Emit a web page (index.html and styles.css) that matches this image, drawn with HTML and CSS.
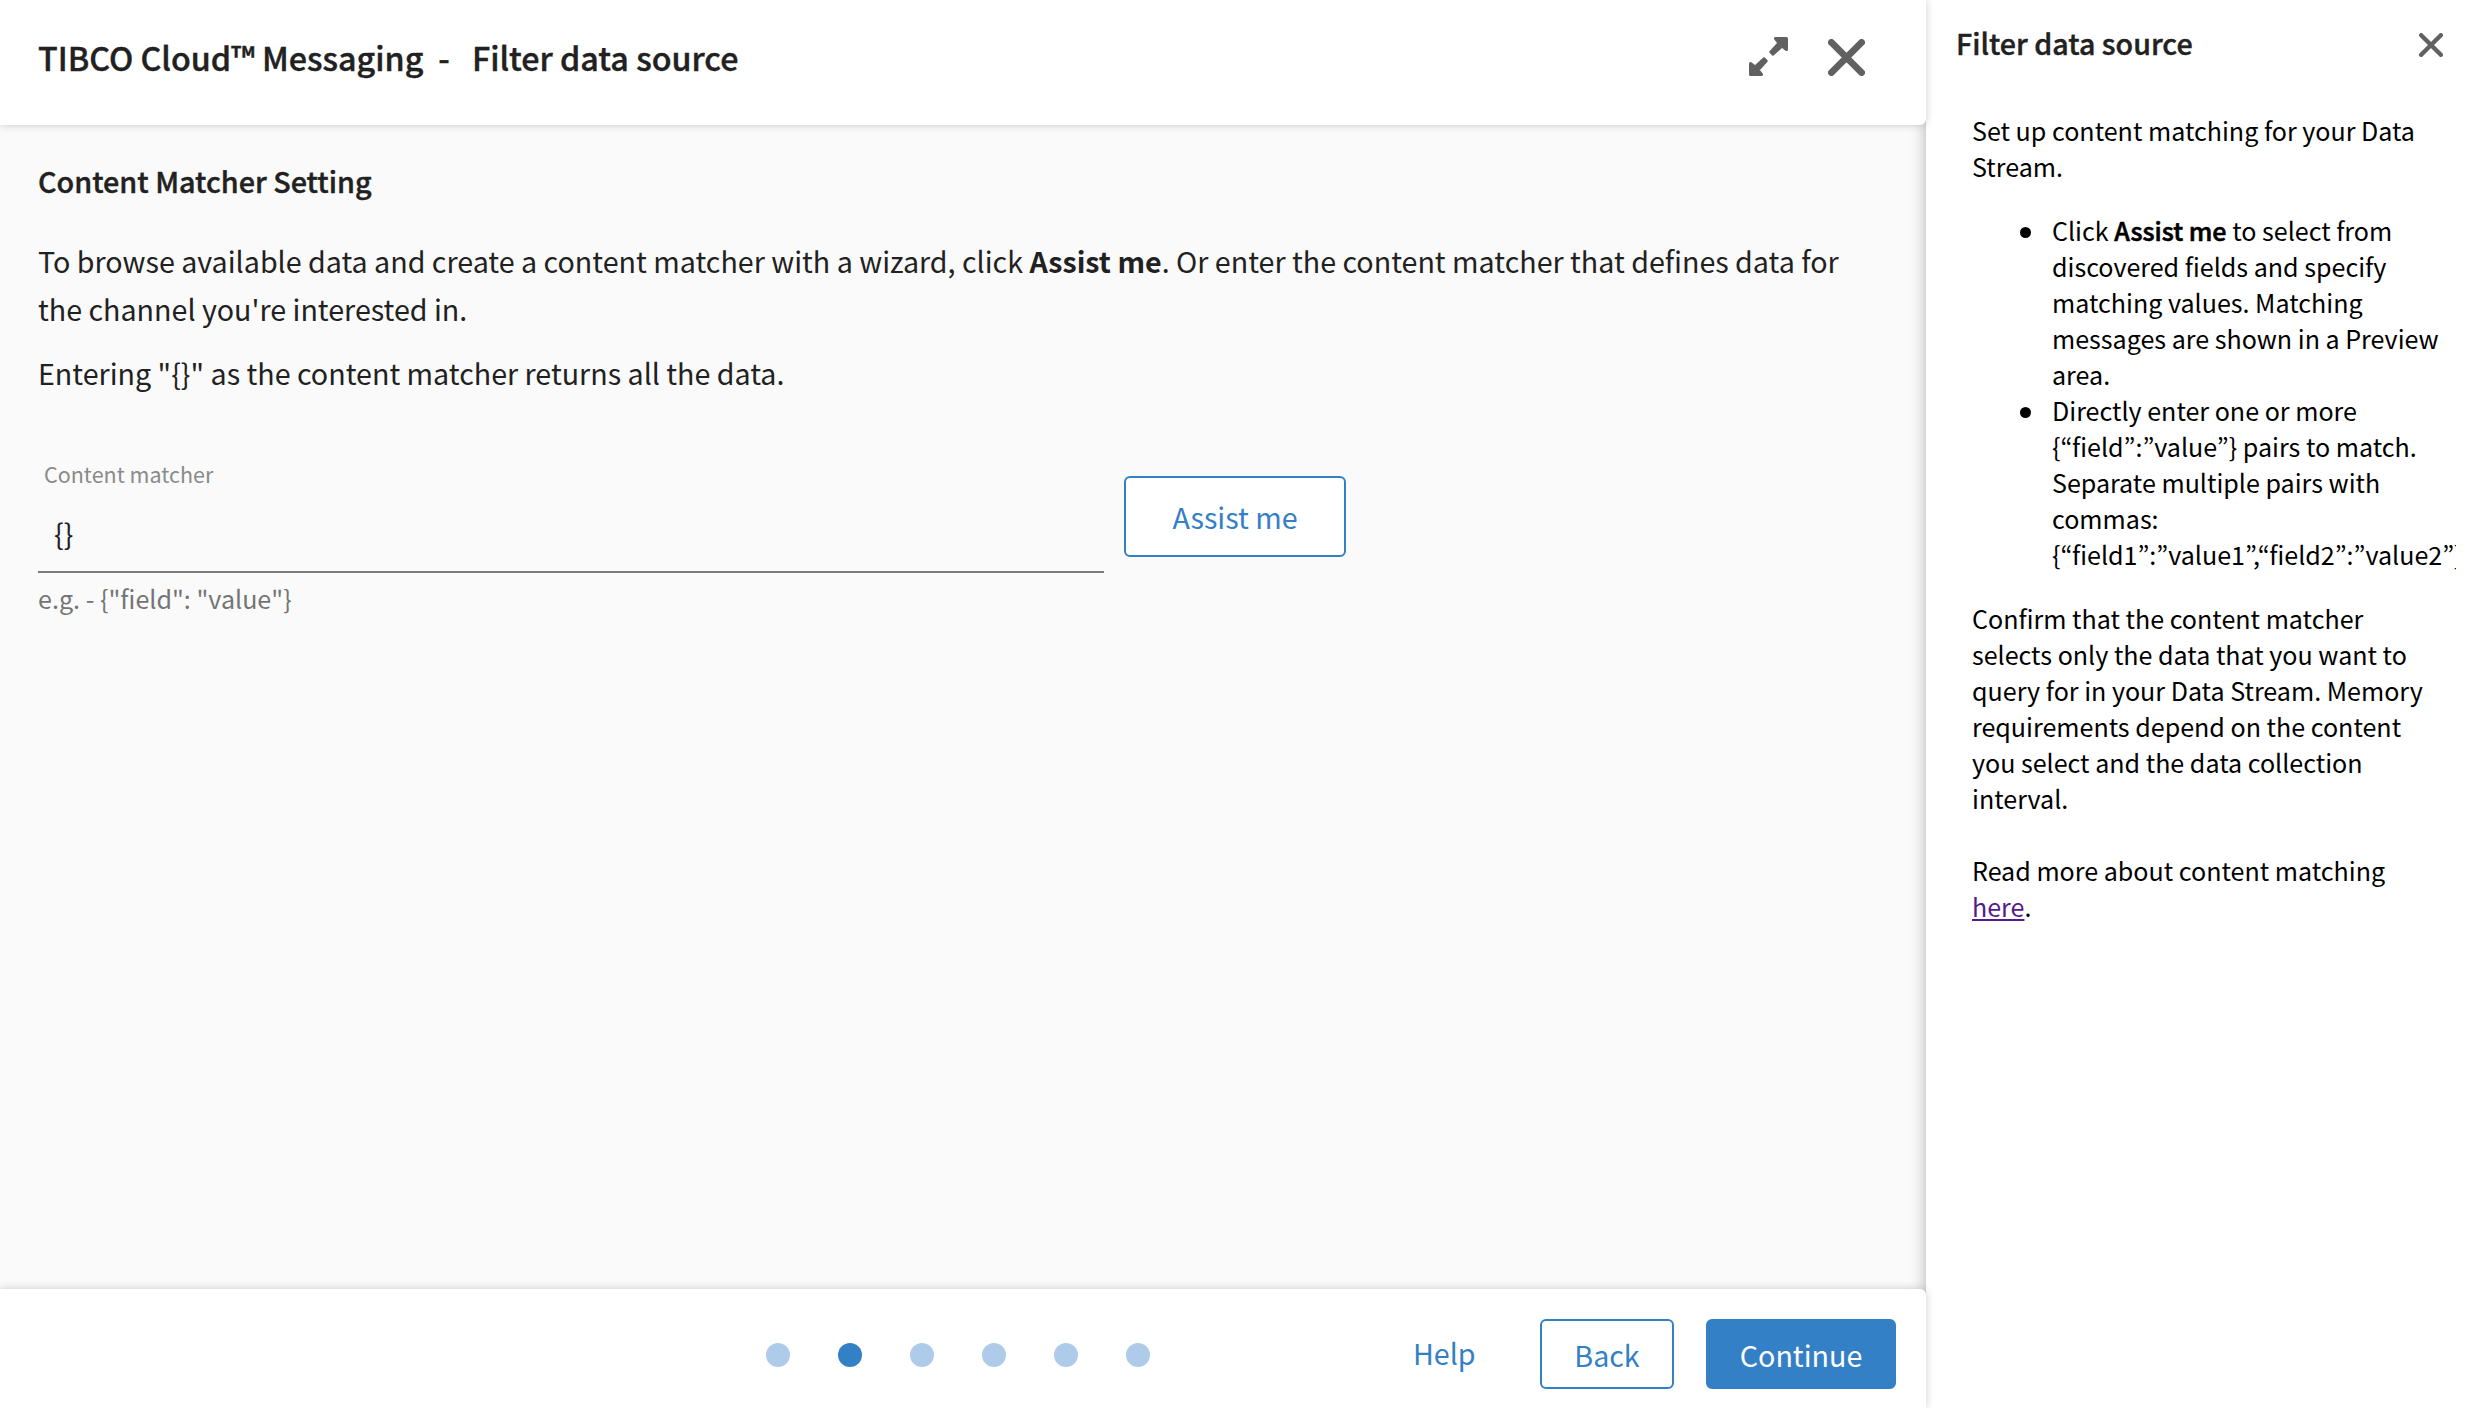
FILE: index.html
```html
<!DOCTYPE html>
<html lang="en">
<head>
<meta charset="utf-8">
<title>Filter data source</title>
<link rel="stylesheet" href="styles.css">
</head>
<body>
<div class="app">
  <main class="wizard">
    <header class="wizard-header">
      <h1 class="wizard-title"><span>TIBCO Cloud™ Messaging</span><span class="dash">-</span><span>Filter data source</span></h1>
      <div class="header-actions">
        <svg class="expand-icon" viewBox="0 0 39 39"><path d="M26.500 1.500H37.500V12.500L33 9 24 17.200 21.800 15 30 6ZM15 21.800L17.200 24 9 33 12.500 37.500H1.500V26.500L6 30Z"/></svg>
        <svg class="close-icon" viewBox="0 0 37 37"><path d="M3.400 3.400L33.600 33.600M33.600 3.400L3.400 33.600"/></svg>
      </div>
    </header>
    <section class="wizard-body">
      <h2 class="section-title">Content Matcher Setting</h2>
      <p class="intro">To browse available data and create a content matcher with a wizard, click <b>Assist me</b>. Or enter the content matcher that defines data for the channel you're interested in.</p>
      <p class="intro">Entering "{}" as the content matcher returns all the data.</p>
      <div class="matcher-row">
        <div class="field">
          <label class="field-label">Content matcher</label>
          <div class="field-value">{}</div>
          <div class="field-hint">e.g. - {"field": "value"}</div>
        </div>
        <button class="btn btn-assist">Assist me</button>
      </div>
    </section>
    <footer class="wizard-footer">
      <div class="steps"><i class="dot"></i><i class="dot active"></i><i class="dot"></i><i class="dot"></i><i class="dot"></i><i class="dot"></i></div>
      <div class="footer-actions">
        <a class="help-link">Help</a>
        <button class="btn btn-back">Back</button>
        <button class="btn btn-primary">Continue</button>
      </div>
    </footer>
  </main>
  <aside class="help">
    <header class="help-header">
      <h2 class="help-title">Filter data source</h2>
      <svg class="help-close" viewBox="0 0 24 24"><path d="M2.200 2.200L21.800 21.800M21.800 2.200L2.200 21.800"/></svg>
    </header>
    <div class="help-body">
      <p>Set up content matching for your Data Stream.</p>
      <ul>
        <li>Click <b>Assist me</b> to select from discovered fields and specify matching values. Matching messages are shown in a Preview area.</li>
        <li>Directly enter one or more {“field”:”value”} pairs to match. Separate multiple pairs with commas: {“field1”:”value1”,“field2”:”value2”}</li>
      </ul>
      <p>Confirm that the content matcher selects only the data that you want to query for in your Data Stream. Memory requirements depend on the content you select and the data collection interval.</p>
      <p class="more">Read more about content matching <a class="link">here</a>.</p>
    </div>
  </aside>
</div>
</body>
</html>
```
FILE: styles.css
```css
* { box-sizing: border-box; }
body { margin: 0; background: #fff; color: #212121; font-family: "Noto Sans CJK KR", sans-serif; }
h1, h2, p { margin: 0; }
.app { display: flex; width: 2456px; height: 1408px; overflow: hidden; }
.wizard { display: flex; flex-direction: column; width: 1926px; flex: none; background: #fafafa; }
.wizard-header { position: relative; z-index: 2; display: flex; justify-content: space-between; height: 125px; padding: 34px 61px 0 38px; background: #fff; border-radius: 0 0 6px 0; box-shadow: 0 0 8px rgba(0, 0, 0, .2); }
.wizard-title { display: flex; font-size: 32.28px; line-height: 46px; font-weight: 500; -webkit-text-stroke: .4px; }
.dash { margin: 0 22px 0 15px; }
.header-actions { display: flex; gap: 40px; padding-top: 3px; }
.expand-icon { width: 39px; height: 39px; fill: #616161; stroke: #616161; stroke-width: 3; stroke-linejoin: round; }
.close-icon { width: 37px; height: 37px; margin-top: 2px; stroke: #616161; stroke-width: 6.8; stroke-linecap: round; fill: none; }
.wizard-body { flex: 1; padding: 32px 38px 0; }
.section-title { font-size: 28.75px; line-height: 48px; font-weight: 500; margin-bottom: 32px; -webkit-text-stroke: .4px; }
.intro { font-size: 28.65px; line-height: 48px; margin-bottom: 16px; }
.matcher-row { display: flex; gap: 20px; margin-top: 60px; }
.field { width: 1066px; }
.field-label { display: block; padding: 1px 0 0 6px; font-size: 21.5px; line-height: 32px; color: #8a8a8a; }
.field-value { height: 83px; padding: 19px 16px 0; font-size: 28.65px; line-height: 48px; border-bottom: 2px solid #7c7c7c; }
.field-hint { font-size: 25.1px; line-height: 50px; color: #757575; }
.btn { padding: 2px 0 0; border: 2px solid #3480c6; border-radius: 6px; background: #fff; color: #3480c6; font: 400 28.65px/1 "Noto Sans CJK KR", sans-serif; }
.btn-assist { width: 222px; height: 81px; margin-top: 19px; }
.wizard-footer { position: relative; z-index: 2; display: flex; height: 119px; background: #fff; border-radius: 0 6px 0 0; box-shadow: 0 0 8px rgba(0, 0, 0, .2); }
.steps { display: flex; gap: 48px; margin: 54px 0 0 766px; }
.dot { width: 24px; height: 24px; border-radius: 50%; background: #aecce9; }
.dot.active { background: #3480c6; }
.footer-actions { display: flex; margin: 30px 0 0 263px; }
.help-link { color: #3480c6; font-size: 28.65px; line-height: 68px; width: 127px; }
.btn-back { width: 134px; height: 70px; margin-right: 32px; }
.btn-primary { width: 190px; height: 70px; background: #3480c6; color: #fff; }
.help { position: relative; z-index: 1; flex: 1; min-width: 0; padding: 19px 0 0 30px; color: #000; background: #fff; box-shadow: 0 0 14px rgba(0, 0, 0, .3); clip-path: inset(0 0 0 -20px); }
.help-header { display: flex; justify-content: space-between; padding-right: 13px; color: #212121; }
.help-title { font-size: 28.65px; line-height: 48px; font-weight: 500; -webkit-text-stroke: .4px; }
.help-close { width: 24px; height: 24px; margin-top: 14px; stroke: #616161; stroke-width: 4.4; stroke-linecap: round; fill: none; }
.help-body { padding: 45px 16px 0 16px; font-size: 25.07px; line-height: 36px; }
.help-body ul { margin: 28px 0; padding-left: 80px; list-style: none; }
.help-body li::before { content: ""; display: inline-block; width: 11px; height: 11px; margin: 0 21px 0 -32px; border-radius: 50%; background: #000; vertical-align: 3px; }
.help-body li b { font-weight: 500; -webkit-text-stroke: .6px; }
.more { margin-top: 36px; }
.link { color: #551a8b; text-decoration: underline; }
```
